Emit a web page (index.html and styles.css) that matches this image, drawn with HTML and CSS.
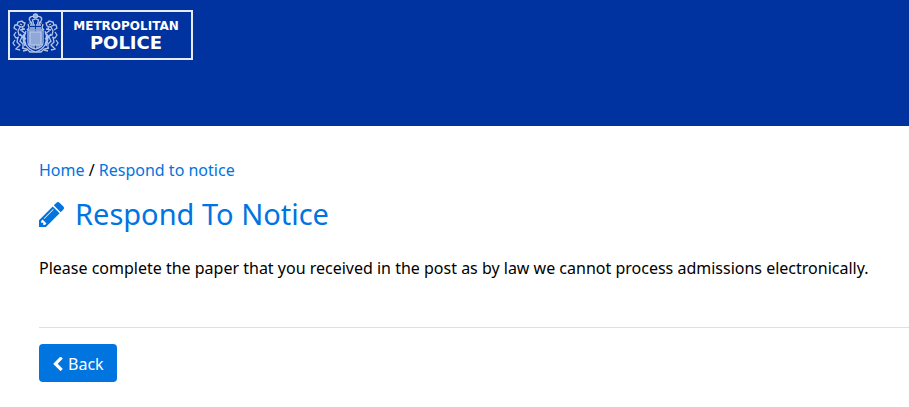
FILE: index.html
```
<!DOCTYPE html>
<html lang="en">
<head>
<meta charset="UTF-8">
<meta name="viewport" content="width=device-width, initial-scale=1">
<title>Respond To Notice</title>
<link rel="stylesheet" href="styles.css">
</head>
<body>
  <header class="header">
    <svg class="logo" viewBox="0 0 185 50" role="img" aria-label="Metropolitan Police">
      <rect class="logo-frame" x="1" y="1" width="183" height="48"/>
      <path class="logo-frame" d="M54 1V49"/>
      <g class="crest">
        <g id="half">
          <!-- helmet and mantling -->
          <path d="M27.5 7C23 5 20 8 22 11l2 3M27.5 9l-3 1 1 4M22 15h5M22 18h5M24 12l-3 1M20 14l1 4-2 2"/>
          <!-- lion -->
          <path d="M16 13l-2-2-4 1-1 3 4 2 3-1 1-3-3-1M12 14l2 1M10 15l-3 0-1 3 3 2M12 17l-2 4 1 4 4 1 3 3M15 17l-1 4 4 3M8 22l-2 3 2 3 3-1M12 20l5-1M10 27l-1 5 3 3-4 4 4 1M14 27l-2 4 3 3 0 4M7 30l-2 3 2 3M12 24l5 6"/>
          <!-- shield and garter -->
          <path d="M27.5 20H20v13q0 4 7.500 6M18 21q-3 7 0 14 3 5 9.500 7M16 24q-2 6 1 12"/>
          <path d="M22 21v14M24 21v16M26 21v17"/>
          <!-- scroll -->
          <path d="M14 38l5 1 3 3 5.500 0M15 41l4-1"/>
        </g>
        <use href="#half" transform="translate(55 0) scale(-1 1)"/>
        <rect class="crest-field" x="22" y="22" width="11" height="13"/>
        <circle class="crest-field" cx="27.500" cy="6" r="2"/>
      </g>
      <text class="logo-top" x="118" y="20">METROPOLITAN</text>
      <text class="logo-bottom" x="118" y="39">POLICE</text>
    </svg>
  </header>

  <main class="content">
    <nav class="breadcrumb">
      <a href="#">Home</a> / <a href="#">Respond to notice</a>
    </nav>
    <h1 class="title">
      <svg class="icon-pencil" viewBox="128 149 1515 1515" aria-hidden="true"><path d="M491 1536l91-91-235-235-91 91v107h128v128h107zm523-928q0-22-22-22-10 0-17 7l-542 542q-7 7-7 17 0 22 22 22 10 0 17-7l542-542q7-7 7-17zm-54-192l416 416-832 832h-416v-416zm683 96q0 53-37 90l-166 166-416-416 166-165q36-38 90-38 53 0 91 38l235 234q37 39 37 91z"/></svg>
      Respond To Notice
    </h1>
    <p class="message">Please complete the paper that you received in the post as by law we cannot process admissions electronically.</p>
    <hr class="line">
    <button class="btn" type="button">
      <svg class="icon-back" viewBox="410 71 1036 1567" aria-hidden="true"><path d="M1427 301l-531 531 531 531q19 19 19 45t-19 45l-166 166q-19 19-45 19t-45-19l-742-742q-19-19-19-45t19-45l742-742q19-19 45-19t45 19l166 166q19 19 19 45t-19 45z"/></svg>
      Back
    </button>
  </main>
</body>
</html>
```
FILE: styles.css
```
body {
  margin: 0;
  background: #fff;
  color: #000;
  font-family: "Noto Sans", sans-serif;
  font-size: 16px;
  line-height: 24px;
}

.header {
  background: #0032a0;
  padding: 10px 8px 66px;
}
.logo {
  display: block;
  width: 185px;
  height: 50px;
}
.logo-frame {
  fill: none;
  stroke: #e6ebf6;
  stroke-width: 2;
}
.logo text {
  fill: #fff;
  font-family: "DejaVu Sans", sans-serif;
  font-weight: bold;
  text-anchor: middle;
}
.logo .logo-top {
  font-size: 12px;
}
.logo .logo-bottom {
  font-size: 18px;
}
.crest {
  fill: none;
  stroke: #b4c5e8;
  stroke-width: 1.3;
}
.crest-field {
  fill: #8fa8d8;
}

.content {
  padding: 32px 0 24px 39px;
}
a {
  color: #0074df;
  text-decoration: none;
}
.title {
  display: flex;
  align-items: center;
  gap: 11px;
  margin: 14px 0 0;
  color: #0074df;
  font-size: 29px;
  font-weight: normal;
  line-height: 36px;
}
.icon-pencil {
  width: 25px;
  height: 25px;
  fill: currentColor;
}
.message {
  margin: 24px 0 47px;
}
.line {
  margin: 0 0 16px;
  border: 0;
  border-top: 1px solid #dfdfdf;
}
.btn {
  display: flex;
  align-items: center;
  gap: 5px;
  padding: 8px 13px 6px 14px;
  border: 0;
  border-radius: 4px;
  background: #0074df;
  color: #fff;
  font: inherit;
  cursor: pointer;
}
.icon-back {
  width: 10px;
  height: 14px;
  fill: currentColor;
}
```
